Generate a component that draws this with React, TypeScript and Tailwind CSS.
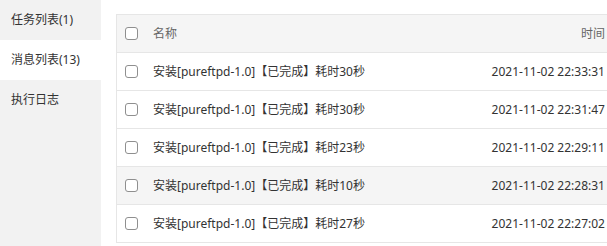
const tabs = [
  { label: "任务列表(1)", active: false },
  { label: "消息列表(13)", active: true },
  { label: "执行日志", active: false },
];

const rows = [
  { name: "安装[pureftpd-1.0]【已完成】耗时30秒", time: "2021-11-02 22:33:31" },
  { name: "安装[pureftpd-1.0]【已完成】耗时30秒", time: "2021-11-02 22:31:47" },
  { name: "安装[pureftpd-1.0]【已完成】耗时23秒", time: "2021-11-02 22:29:11" },
  { name: "安装[pureftpd-1.0]【已完成】耗时10秒", time: "2021-11-02 22:28:31", hover: true },
  { name: "安装[pureftpd-1.0]【已完成】耗时27秒", time: "2021-11-02 22:27:02" },
];

function Checkbox() {
  return <span className="block h-[13px] w-[13px] shrink-0 rounded-[3px] border border-[#8f8f8f] bg-white" />;
}

export default function App() {
  return (
    <div
      className="flex h-[246px] w-[607px] overflow-hidden bg-white text-[12px] text-[#333]"
      style={{ fontFamily: '"Noto Sans", "Noto Sans CJK SC", sans-serif' }}
    >
      <aside className="flex w-[101px] shrink-0 flex-col bg-[#f2f2f2]">
        {tabs.map((t) => (
          <div
            key={t.label}
            className={`flex h-[40px] items-center pl-[11px] ${t.active ? "bg-white" : ""}`}
          >
            {t.label}
          </div>
        ))}
      </aside>
      <main className="flex-1 pl-[15px] pt-[14px]">
        <div className="w-[520px] border-l border-t border-[#e6e6e6]">
          <div className="flex h-[38px] items-center border-b border-[#e6e6e6] bg-[#f5f5f5] text-[#666]">
            <div className="flex w-[36px] pl-[8px]">
              <Checkbox />
            </div>
            <div className="flex-1">名称</div>
            <div className="pr-[31px] text-right">时间</div>
          </div>
          {rows.map((r, i) => (
            <div
              key={i}
              className={`flex h-[38px] items-center border-b border-[#e6e6e6] ${r.hover ? "bg-[#f5f5f5]" : ""}`}
            >
              <div className="flex w-[36px] pl-[8px]">
                <Checkbox />
              </div>
              <div className="flex-1">{r.name}</div>
              <div className="pr-[31px] text-right">{r.time}</div>
            </div>
          ))}
        </div>
      </main>
    </div>
  );
}
